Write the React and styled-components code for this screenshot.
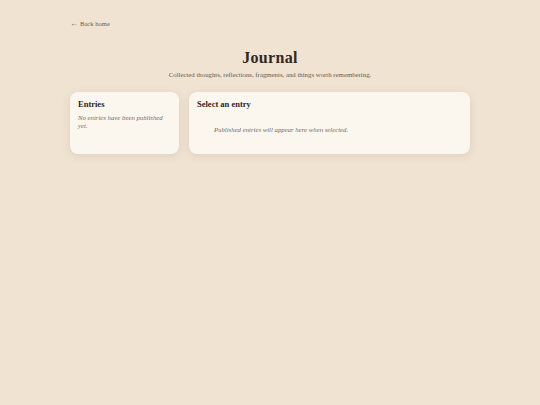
import React from "react";
import styled, { createGlobalStyle } from "styled-components";

const Global = createGlobalStyle`
  html, body { margin: 0; padding: 0; background: #f0e3d2; }
  body { font-family: "Liberation Serif", "Times New Roman", serif; color: #3a2c22; }
  * { box-sizing: border-box; }
`;

const Page = styled.div`
  width: 400px;
  margin: 0 auto;
  padding-top: 19px;
  min-height: 405px;
`;

const Nav = styled.nav`
  display: flex;
  font-size: 6.6px;
  line-height: 9px;
`;

const Back = styled.a`
  display: inline-flex;
  align-items: center;
  gap: 2px;
  color: #6e5e52;
  text-decoration: none;
`;

const Arrow = styled.span`
  font-size: 8px;
  line-height: 9px;
`;

const Header = styled.header`
  display: flex;
  flex-direction: column;
  align-items: center;
  margin-top: 20px;
`;

const Title = styled.h1`
  margin: 0;
  font-size: 16px;
  font-weight: 700;
  letter-spacing: 0.3px;
  color: #35271f;
  line-height: 20px;
`;

const Subtitle = styled.p`
  margin: 2px 0 0;
  font-size: 6.8px;
  line-height: 9px;
  color: #6a5a4e;
`;

const Grid = styled.div`
  display: grid;
  grid-template-columns: 109px 1fr;
  gap: 10px;
  margin-top: 13px;
`;

const Card = styled.section`
  background: #fcf7ee;
  border-radius: 8px;
  height: 62px;
  padding: 7px 8px;
  box-shadow: 0 2px 8px rgba(120, 90, 60, 0.14);
`;

const CardTitle = styled.h2`
  margin: 0;
  font-size: 8.5px;
  font-weight: 700;
  color: #2f231b;
  line-height: 10px;
`;

const Note = styled.p`
  margin: ${(p) => p.$m};
  font-size: 6.75px;
  font-style: italic;
  line-height: 8px;
  color: #776a60;
`;

export default function App() {
  return (
    <>
      <Global />
      <Page>
        <Nav>
          <Back href="#">
            <Arrow>←</Arrow>
            <span>Back home</span>
          </Back>
        </Nav>
        <Header>
          <Title>Journal</Title>
          <Subtitle>Collected thoughts, reflections, fragments, and things worth remembering.</Subtitle>
        </Header>
        <Grid>
          <Card>
            <CardTitle>Entries</CardTitle>
            <Note $m="5px 0 0">No entries have been published yet.</Note>
          </Card>
          <Card>
            <CardTitle>Select an entry</CardTitle>
            <Note $m="17px 0 0 17px">Published entries will appear here when selected.</Note>
          </Card>
        </Grid>
      </Page>
    </>
  );
}
